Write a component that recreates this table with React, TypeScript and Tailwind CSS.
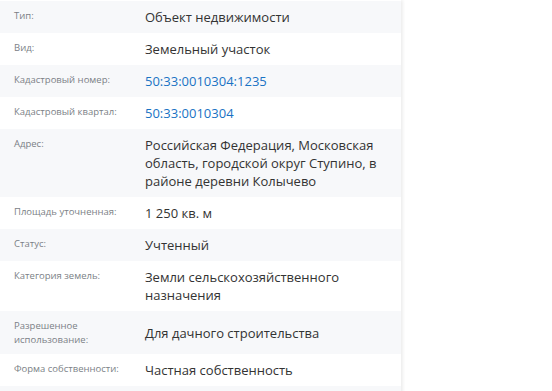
import React from "react";

type Row = {
  label: string;
  value: string;
  link?: boolean;
};

const rows: Row[] = [
  { label: "Тип:", value: "Объект недвижимости" },
  { label: "Вид:", value: "Земельный участок" },
  { label: "Кадастровый номер:", value: "50:33:0010304:1235", link: true },
  { label: "Кадастровый квартал:", value: "50:33:0010304", link: true },
  {
    label: "Адрес:",
    value:
      "Российская Федерация, Московская область, городской округ Ступино, в районе деревни Колычево",
  },
  { label: "Площадь уточненная:", value: "1 250 кв. м" },
  { label: "Статус:", value: "Учтенный" },
  { label: "Категория земель:", value: "Земли сельскохозяйственного назначения" },
  { label: "Разрешенное использование:", value: "Для дачного строительства" },
  { label: "Форма собственности:", value: "Частная собственность" },
];

export default function App() {
  return (
    <div
      className="h-[391px] overflow-hidden bg-white"
      style={{ fontFamily: '"Open Sans", "Noto Sans", sans-serif' }}
    >
      <div className="w-[401px] bg-white pt-[1px] shadow-[2px_0_3px_rgba(0,0,0,0.07)]">
        {rows.map((r, i) => (
          <div
            key={r.label}
            className={`flex py-[7px] ${i % 2 === 0 ? "bg-[#f7f8fa]" : "bg-white"}`}
          >
            <div className="w-[145px] shrink-0 self-start pl-[14px] pr-3 pt-[1px] text-[9.5px] leading-[14px] text-[#7b7f86]">
              {r.label}
            </div>
            <div
              className={`flex-1 self-center pr-[8px] text-[13px] leading-[18px] ${
                r.link ? "text-[#1a73c4]" : "text-[#333333]"
              }`}
            >
              {r.value}
            </div>
          </div>
        ))}
        <div className="h-8 bg-[#f7f8fa]" />
      </div>
    </div>
  );
}
